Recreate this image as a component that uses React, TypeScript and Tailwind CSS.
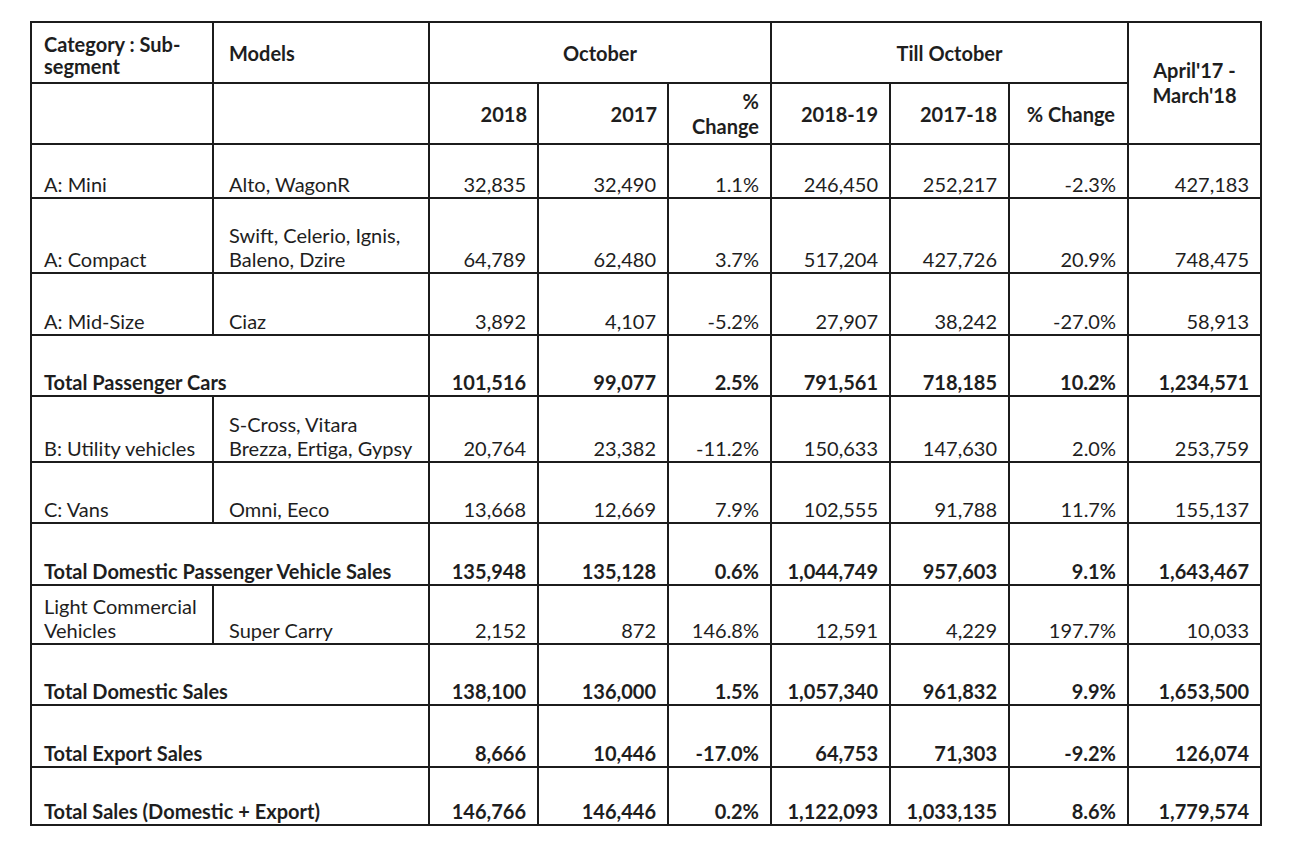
import React from "react";

type Row = {
  cat: string;
  model?: string;
  total?: boolean;
  h: string;
  vals: string[];
};

const rows: Row[] = [
  { cat: "A: Mini", model: "Alto, WagonR", h: "h-[54px]", vals: ["32,835", "32,490", "1.1%", "246,450", "252,217", "-2.3%", "427,183"] },
  { cat: "A: Compact", model: "Swift, Celerio, Ignis,\nBaleno, Dzire", h: "h-[75px]", vals: ["64,789", "62,480", "3.7%", "517,204", "427,726", "20.9%", "748,475"] },
  { cat: "A: Mid-Size", model: "Ciaz", h: "h-[62px]", vals: ["3,892", "4,107", "-5.2%", "27,907", "38,242", "-27.0%", "58,913"] },
  { cat: "Total Passenger Cars", total: true, h: "h-[61px]", vals: ["101,516", "99,077", "2.5%", "791,561", "718,185", "10.2%", "1,234,571"] },
  { cat: "B: Utility vehicles", model: "S-Cross, Vitara\nBrezza, Ertiga, Gypsy", h: "h-[66px]", vals: ["20,764", "23,382", "-11.2%", "150,633", "147,630", "2.0%", "253,759"] },
  { cat: "C: Vans", model: "Omni, Eeco", h: "h-[61px]", vals: ["13,668", "12,669", "7.9%", "102,555", "91,788", "11.7%", "155,137"] },
  { cat: "Total Domestic Passenger Vehicle Sales", total: true, h: "h-[62px]", vals: ["135,948", "135,128", "0.6%", "1,044,749", "957,603", "9.1%", "1,643,467"] },
  { cat: "Light Commercial\nVehicles", model: "Super Carry", h: "h-[59px]", vals: ["2,152", "872", "146.8%", "12,591", "4,229", "197.7%", "10,033"] },
  { cat: "Total Domestic Sales", total: true, h: "h-[61px]", vals: ["138,100", "136,000", "1.5%", "1,057,340", "961,832", "9.9%", "1,653,500"] },
  { cat: "Total Export Sales", total: true, h: "h-[62px]", vals: ["8,666", "10,446", "-17.0%", "64,753", "71,303", "-9.2%", "126,074"] },
  { cat: "Total Sales (Domestic + Export)", total: true, h: "h-[58px]", vals: ["146,766", "146,446", "0.2%", "1,122,093", "1,033,135", "8.6%", "1,779,574"] },
];

const cell = "border-2 border-[#1c1c1c]";

export default function App() {
  return (
    <div
      className="w-[1297px] h-[853px] bg-white text-[#1e1e1e] pt-[21px] pl-[30px]"
      style={{ fontFamily: "Lato, 'Liberation Sans', sans-serif" }}
    >
      <table className="border-collapse table-fixed w-[1230px] text-[20px] leading-[24px]">
        <colgroup>
          <col className="w-[182px]" />
          <col className="w-[216px]" />
          <col className="w-[109px]" />
          <col className="w-[130px]" />
          <col className="w-[103px]" />
          <col className="w-[119px]" />
          <col className="w-[119px]" />
          <col className="w-[119px]" />
          <col className="w-[133px]" />
        </colgroup>
        <thead>
          <tr className="h-[61px] font-bold">
            <td className={`${cell} align-top pl-[12px] pt-[10px] leading-[22px]`}>
              Category : Sub-
              <br />
              segment
            </td>
            <td className={`${cell} align-middle pl-[15px]`}>Models</td>
            <td colSpan={3} className={`${cell} text-center align-middle`}>
              October
            </td>
            <td colSpan={3} className={`${cell} text-center align-middle`}>
              Till October
            </td>
            <td rowSpan={2} className={`${cell} text-center align-middle leading-[25px]`}>
              April'17 -
              <br />
              March'18
            </td>
          </tr>
          <tr className="h-[61px] font-bold">
            <td className={cell}></td>
            <td className={cell}></td>
            <td className={`${cell} text-right pr-[10px]`}>2018</td>
            <td className={`${cell} text-right pr-[10px]`}>2017</td>
            <td className={`${cell} text-right pr-[11px] leading-[25px]`}>
              %
              <br />
              Change
            </td>
            <td className={`${cell} text-right pr-[11px]`}>2018-19</td>
            <td className={`${cell} text-right pr-[11px]`}>2017-18</td>
            <td className={`${cell} text-right pr-[12px]`}>% Change</td>
          </tr>
        </thead>
        <tbody>
          {rows.map((r) => (
            <tr key={r.cat} className={`${r.h} ${r.total ? "font-bold" : ""}`}>
              {r.total ? (
                <td colSpan={2} className={`${cell} align-bottom pl-[12px] pb-[1px] whitespace-nowrap`}>
                  {r.cat}
                </td>
              ) : (
                <>
                  <td className={`${cell} align-bottom pl-[12px] pb-[1px] whitespace-pre-line`}>
                    {r.cat}
                  </td>
                  <td className={`${cell} align-bottom pl-[15px] pb-[1px] whitespace-pre-line`}>
                    {r.model}
                  </td>
                </>
              )}
              {r.vals.map((v, i) => (
                <td key={i} className={`${cell} align-bottom text-right pr-[11px] pb-[1px]`}>
                  {v}
                </td>
              ))}
            </tr>
          ))}
        </tbody>
      </table>
    </div>
  );
}
